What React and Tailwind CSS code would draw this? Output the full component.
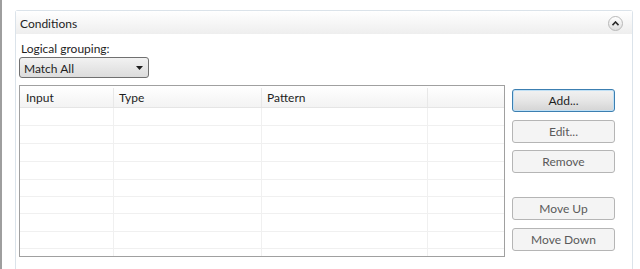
import React from "react";

const font = { fontFamily: 'Lato, "Noto Sans", sans-serif' };

function Btn({ children, primary }) {
  return (
    <div
      className={
        "flex h-[23px] w-[103px] items-center justify-center rounded-[3px] border pt-[1px] text-[12px] " +
        (primary
          ? "border-[#3c7fb1] bg-gradient-to-b from-[#f2f2f2] via-[#e6e6e6] to-[#d4d4d4] text-[#1e1e1e] shadow-[inset_0_0_0_1px_#c0e0f5]"
          : "border-[#b5b5b5] bg-[#f4f4f4] text-[#5a5a5a]")
      }
    >
      {children}
    </div>
  );
}

const rowHeights = [18, 18, 18, 18, 17, 17, 18, 17, 8];

export default function App() {
  return (
    <div className="relative h-[269px] w-[640px] overflow-hidden bg-white" style={font}>
      <div className="absolute left-0 top-0 h-full w-[2px] bg-[#9e9e9e]" />
      <div className="ml-[15px] mt-[10px] h-[259px] w-[618px] rounded-t-[3px] border-x border-t border-[#dbe3ea]">
        <div className="flex h-[23px] items-center justify-between bg-gradient-to-b from-[#ffffff] to-[#eeeeee] pl-[4px] pr-[9px]">
          <span className="pt-[3px] text-[12px] text-[#1e1e1e]">Conditions</span>
          <div className="mt-[2px] flex h-[15px] w-[15px] items-center justify-center rounded-full border border-[#b8b8b8] bg-gradient-to-b from-[#ffffff] to-[#dedede]">
            <svg width="7" height="5" viewBox="0 0 7 5">
              <path d="M0.5 4.2 L3.5 1 L6.5 4.2" fill="none" stroke="#2a2a2a" strokeWidth="1.6" />
            </svg>
          </div>
        </div>
        <div className="px-[3px]">
          <div className="mt-[8px] pl-[2px] text-[12px] leading-[14px] text-[#1e1e1e]">
            Logical grouping:
          </div>
          <div className="mt-[1px] flex h-[21px] w-[130px] items-center justify-between rounded-[3px] border border-[#707070] bg-gradient-to-b from-[#f2f2f2] to-[#dcdcdc] pl-[4px] pr-[5px] text-[12px] text-[#1e1e1e]">
            <span className="pt-[2px]">Match All</span>
            <svg width="7" height="4" viewBox="0 0 7 4">
              <path d="M0 0 H7 L3.5 4 Z" fill="#1e1e1e" />
            </svg>
          </div>
          <div className="mt-[7px] flex items-start">
            <div className="h-[172px] w-[486px] overflow-hidden border border-[#a0a0a0] bg-white">
              <div className="flex h-[22px] border-b border-[#e5e5e5] bg-gradient-to-b from-[#ffffff] to-[#f3f3f3] pt-[2px] text-[12px] text-[#1e1e1e]">
                <div className="flex w-[94px] items-center border-r border-[#e8e8e8] pl-[6px]">Input</div>
                <div className="flex w-[148px] items-center border-r border-[#e8e8e8] pl-[5px]">Type</div>
                <div className="flex w-[166px] items-center border-r border-[#e8e8e8] pl-[5px]">Pattern</div>
                <div className="flex-1" />
              </div>
              {rowHeights.map((h, i) => (
                <div
                  key={i}
                  className="flex border-b border-[#f0f0f0]"
                  style={{ height: h }}
                >
                  <div className="w-[94px] border-r border-[#f0f0f0]" />
                  <div className="w-[148px] border-r border-[#f0f0f0]" />
                  <div className="w-[166px] border-r border-[#f0f0f0]" />
                  <div className="flex-1" />
                </div>
              ))}
            </div>
            <div className="ml-[7px] mt-[4px] flex flex-col">
              <Btn primary>Add...</Btn>
              <div className="mt-[8px]"><Btn>Edit...</Btn></div>
              <div className="mt-[7px]"><Btn>Remove</Btn></div>
              <div className="mt-[24px]"><Btn>Move Up</Btn></div>
              <div className="mt-[8px]"><Btn>Move Down</Btn></div>
            </div>
          </div>
        </div>
      </div>
    </div>
  );
}
